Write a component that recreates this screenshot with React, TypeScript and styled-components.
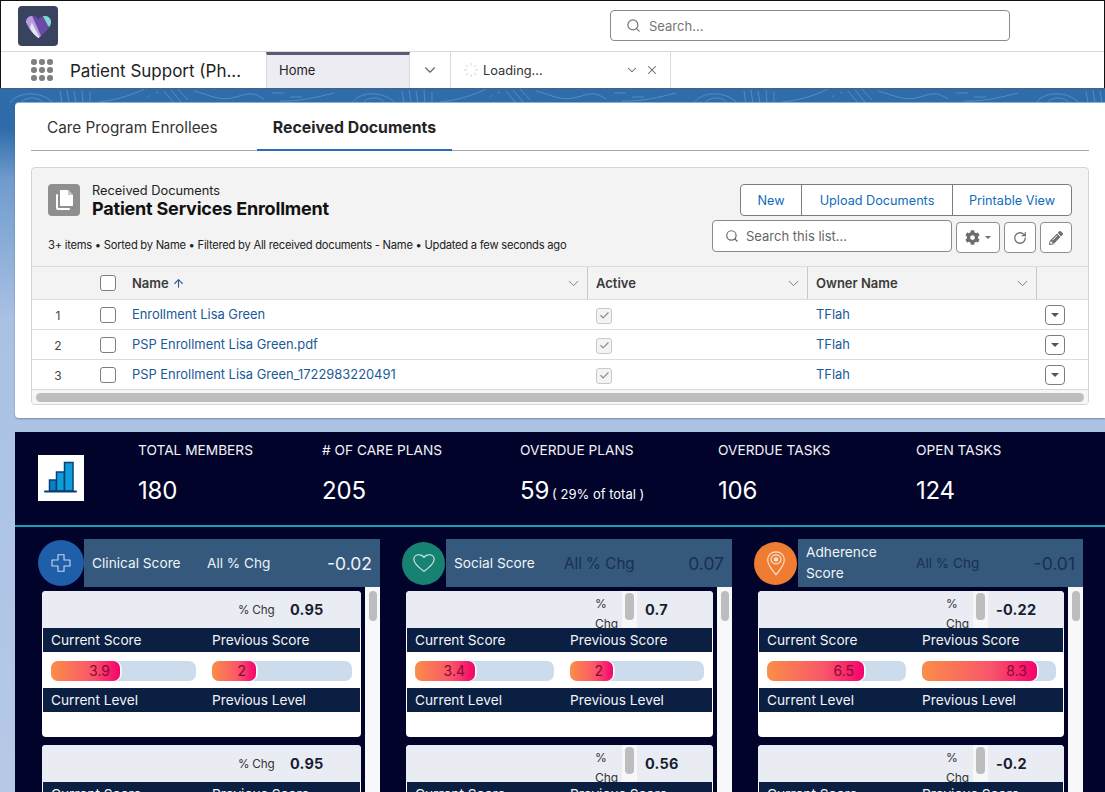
import React from "react";
import styled, { createGlobalStyle } from "styled-components";
import { Search, ChevronDown, X, ArrowUp, RotateCw, Check } from "lucide-react";
import { FaCog, FaPencilAlt } from "react-icons/fa";

const Global = createGlobalStyle`
  html, body { margin: 0; padding: 0; background: #fff; }
  body { font-family: Inter, "Liberation Sans", sans-serif; color: #181818; -webkit-font-smoothing: antialiased; }
  * { box-sizing: border-box; }
`;

const Frame = styled.div`
  position: relative; isolation: isolate;
  width: 1105px; height: 792px; overflow: hidden; background: #fff;
  outline: 1px solid #111; outline-offset: -1px;
`;

const TopBar = styled.header`
  height: 52px; display: flex; align-items: flex-start; border-bottom: 1px solid #d9d9d9;
  padding: 6px 0 0 18px;
`;
const Logo = styled.div`
  width: 40px; height: 40px; border-radius: 4px; background: #3a435d;
  display: flex; align-items: flex-start; justify-content: center; padding-top: 9px;
`;
const GlobalSearch = styled.div`
  margin: 4px 0 0 552px; width: 400px; height: 31px; border: 1px solid #8a8a8a; border-radius: 4px;
  display: flex; align-items: center; gap: 8px; padding-left: 15px; color: #757575; font-size: 13px;
`;

const NavBar = styled.nav`
  height: 36px; display: flex; align-items: stretch;
`;
const Launcher = styled.div`
  width: 70px; padding-left: 31px; display: flex; align-items: center;
`;
const Dots = styled.div`
  display: grid; grid-template-columns: repeat(3, 5.500px); gap: 2.500px;
  span { width: 5.500px; height: 5.500px; border-radius: 50%; background: #7f7f7f; }
`;
const AppName = styled.div`
  width: 196px; font-size: 17px; line-height: 38px; color: #222; white-space: nowrap;
`;
const HomeTab = styled.div`
  width: 144px; background: #eeecf3; border-top: 3px solid #5c5877; border-left: 1px solid #d9d9d9; border-right: 1px solid #d9d9d9;
  padding-left: 12px; font-size: 13px; line-height: 31px; color: #222;
`;
const TabMenu = styled.div`
  width: 41px; border-right: 1px solid #d9d9d9; display: flex; align-items: center; justify-content: center; color: #666;
`;
const LoadingTab = styled.div`
  width: 220px; border-right: 1px solid #d9d9d9; display: flex; align-items: center; padding-left: 12px; gap: 4px;
  font-size: 12.800px; color: #333;
`;
const LoadingLabel = styled.span`
  flex: 1;
`;
const LoadingActions = styled.div`
  display: flex; align-items: center; gap: 6px; padding-right: 11px; color: #666;
`;

const Stage = styled.main`
  position: relative; height: 704px; padding: 14px 0 0 15px;
  background: linear-gradient(180deg, #2f6daa 0, #2f6daa 40px, #6f9bcd 90px, #a9c1e3 230px, #b6c9e7 704px);
  border-top: 1px solid #56588a;
`;
const Topo = styled.svg`
  position: absolute; left: 0; top: 0; width: 1105px; height: 14px; z-index: 0;
`;
const WhiteCard = styled.section`
  position: relative; z-index: 1; height: 315px; background: #fff; border-radius: 4px 0 0 4px;
  box-shadow: 0 1px 2px rgba(60,70,90,.45), 0 -1px 0 #8fb4d9;
  padding: 0 16px;
`;
const TabStrip = styled.div`
  height: 48px; display: flex; border-bottom: 1px solid #a8a8a8; margin-bottom: 16px;
`;
const PlainTab = styled.div`
  width: 226px; padding-left: 16px; font-size: 15.300px; line-height: 50px; height: 48px; color: #333;
`;
const ActiveTab = styled.div`
  width: 195px; text-align: center; font-size: 15.800px; line-height: 50px; height: 48px; font-weight: 700; color: #242424;
  border-bottom: 2px solid #2a6fb5;
`;

const ListBox = styled.div`
  height: 238px; border: 1px solid #d5d5d5; border-radius: 4px; background: #f3f3f3; width: 1058px; overflow: hidden;
`;
const ListHead = styled.div`
  height: 98px; position: relative; padding: 15px 16px 0;
  display: flex; justify-content: space-between;
`;
const TitleGroup = styled.div`
  display: flex; gap: 12px; align-items: flex-start;
`;
const DocIcon = styled.div`
  width: 32px; height: 32px; border-radius: 4px; background: #8f8f8f; display: flex; align-items: center; justify-content: center; margin-top: 1px;
`;
const TitleText = styled.div``;
const Kicker = styled.div`
  font-size: 12.800px; line-height: 16px; color: #222;
`;
const ListTitle = styled.div`
  font-size: 18px; line-height: 19px; font-weight: 700; color: #111; letter-spacing: -0.2px;
`;
const MetaLine = styled.div`
  position: absolute; left: 16px; top: 69px; font-size: 11.200px; line-height: 16px; color: #222; white-space: nowrap; letter-spacing: -0.25px;
`;
const Controls = styled.div`
  display: flex; flex-direction: column; align-items: flex-end; gap: 4px; margin-top: 1px;
`;
const ButtonGroup = styled.div`
  display: flex; height: 32px; border: 1px solid #7d7d7d; border-radius: 4px; background: #fff;
`;
const GroupBtn = styled.div<{ $w: number }>`
  width: ${p => p.$w}px; display: flex; align-items: center; justify-content: center; font-size: 12.700px; color: #0f6cbd;
  & + & { border-left: 1px solid #7d7d7d; }
`;
const ToolRow = styled.div`
  display: flex; gap: 4px; align-items: flex-start;
`;
const ListSearch = styled.div`
  width: 240px; height: 32px; border: 1px solid #8a8a8a; border-radius: 4px; background: #fff;
  display: flex; align-items: center; gap: 7px; padding-left: 12px; font-size: 13px; color: #666;
`;
const IconBtn = styled.div<{ $w: number }>`
  width: ${p => p.$w}px; height: 31px; margin-top: 2px; border: 1px solid #8f8f8f; border-radius: 4px; background: #fff;
  display: flex; align-items: center; justify-content: center; gap: 5px; color: #706e6b;
`;
const Caret = styled.span`
  width: 0; height: 0; border-left: 3px solid transparent; border-right: 3px solid transparent; border-top: 3.500px solid #706e6b;
`;

const Row = styled.div<{ $head?: boolean }>`
  display: grid; grid-template-columns: 52px 48px 455px 220px 229px 1fr; align-items: center;
  height: ${p => (p.$head ? 33 : 30)}px;
  background: ${p => (p.$head ? "#f3f3f3" : "#fff")};
  border-top: 1px solid #dcdcdc;
  font-size: 13px;
`;
const IndexCell = styled.div`
  text-align: center; font-size: 12px; color: #444; padding-top: 2px;
`;
const CheckCell = styled.div`
  padding-left: 16px; display: flex;
`;
const Box = styled.span`
  width: 16px; height: 16px; border: 1px solid #7d7d7d; border-radius: 3px; background: #fff; display: block;
`;
const HeadCell = styled.div<{ $rule?: boolean }>`
  height: 100%; display: flex; align-items: center; justify-content: space-between; gap: 4px;
  padding: 0 5px 0 ${p => (p.$rule ? 8 : 0)}px; font-weight: 600; color: #3a3a3a;
  border-left: ${p => (p.$rule ? "1px solid #c9c9c9" : "0")};
`;
const SortName = styled.span`
  display: flex; align-items: center; gap: 3px;
`;
const RowChevron = styled.span`
  display: flex; color: #6d6d6d;
`;
const LinkText = styled.a`
  color: #1b5a98; font-size: 12.900px; text-decoration: none;
`;
const OwnerCell = styled.div`
  padding-left: 9px; display: flex;
`;
const ActiveCell = styled.div`
  padding: 2px 0 0 9px; display: flex;
`;
const DisabledBox = styled.span`
  width: 16px; height: 16px; border: 1px solid #c9c9c9; border-radius: 3px; background: #f3f3f3; display: flex; align-items: center; justify-content: center; color: #8a8a8a;
`;
const ActionCell = styled.div`
  padding-left: 9px; display: flex;
`;
const RowAction = styled.span`
  width: 20px; height: 20px; border: 1px solid #7d7d7d; border-radius: 4px; background: #fff; display: flex; align-items: center; justify-content: center;
`;
const ActionCaret = styled.span`
  width: 0; height: 0; border-left: 4px solid transparent; border-right: 4px solid transparent; border-top: 4.500px solid #555;
`;
const HScroll = styled.div`
  height: 16px; border-top: 1px solid #d8d8d8; background: #f6f6f6; padding: 3px 4px;
`;
const HThumb = styled.div`
  height: 9px; border-radius: 5px; background: #bdbdbd;
`;

const Dashboard = styled.section`
  position: relative; z-index: 1; margin-top: 14px; height: 360px; background: #02032a; color: #fff;
`;
const KpiRow = styled.div`
  height: 95px; border-bottom: 2px solid #1a9fb0;
  display: grid; grid-template-columns: 100px 184px 198px 198px 198px 198px; padding: 23px 0 0 23px;
`;
const ChartTile = styled.div`
  width: 46px; height: 46px; background: #fff; display: flex;
`;
const KpiCell = styled.div`
  margin-top: -15.500px;
`;
const KpiLabel = styled.div`
  font-size: 13.700px; line-height: 20px; color: #f2f2f6; white-space: nowrap;
`;
const KpiValue = styled.div`
  margin-top: 16px; font-size: 24px; line-height: 30px; color: #fff; white-space: nowrap; letter-spacing: -0.2px;
`;
const KpiNote = styled.span`
  font-size: 13px; margin-left: 3px; letter-spacing: 0;
`;

const ScoreGrid = styled.div`
  display: grid; grid-template-columns: 342px 330px 329px; column-gap: 22px; padding: 12px 0 0 23px;
`;
const ScoreCol = styled.div``;
const ScoreHead = styled.div`
  display: flex; height: 48px; align-items: center;
`;
const Circle = styled.div<{ $bg: string; $size: number; $after: number }>`
  width: ${p => p.$size}px; height: ${p => p.$size}px; flex: none; border-radius: 50%; background: ${p => p.$bg};
  margin-right: ${p => p.$after}px;
  display: flex; align-items: center; justify-content: center;
`;
const HeadBand = styled.div<{ $gap: number }>`
  flex: 1; height: 48px; background: #34597d; display: grid; align-items: center;
  grid-template-columns: ${p => p.$gap}px 1fr auto; padding: 0 8px;
`;
const ScoreName = styled.div`
  font-size: 13.700px; line-height: 21px; color: #f1f4f8;
`;
const AllChg = styled.div<{ $dark?: boolean; $size: number }>`
  font-size: ${p => p.$size}px; color: ${p => (p.$dark ? "#1a3050" : "#eef2f7")};
`;
const AllVal = styled.div<{ $dark?: boolean }>`
  font-size: 17.500px; color: ${p => (p.$dark ? "#1a3050" : "#eef2f7")};
`;
const ScoreBody = styled.div`
  display: grid; grid-template-columns: 1fr 15px; column-gap: 4px; height: 210px;
`;
const CardStack = styled.div`
  padding: 4px 0 0 4px; display: flex; flex-direction: column; gap: 8px; height: 210px; overflow: hidden;
`;
const VTrack = styled.div`
  background: #f8f8fb; padding: 4px 3px 0 4px;
`;
const VThumb = styled.div<{ $h: number }>`
  height: ${p => p.$h}px; border-radius: 4px; background: #bdbdbd;
`;
const ScoreCard = styled.article`
  flex: none; height: 146px; background: #fff; border-radius: 4px; overflow: hidden;
`;
const PctStrip = styled.div<{ $left: number }>`
  height: 37px; background: #e9edf3; display: flex; padding-left: ${p => p.$left}px; align-items: flex-start; overflow: hidden;
`;
const PctInline = styled.div`
  font-size: 11.700px; line-height: 38px; color: #333; width: 52px; white-space: nowrap; letter-spacing: -0.2px;
`;
const PctWrap = styled.div`
  width: 27px; font-size: 12px; line-height: 19.500px; color: #333; padding-top: 3px;
`;
const MiniTrack = styled.div`
  width: 15px; height: 37px; background: #f7f7f9; padding: 2px 3px 0 3px;
`;
const MiniThumb = styled.div`
  height: 27px; border-radius: 4px; background: #bdbdbd;
`;
const PctVal = styled.div<{ $gap: number }>`
  font-size: 14.500px; line-height: 38px; font-weight: 700; color: #1a1d33; margin-left: ${p => p.$gap}px; letter-spacing: .2px;
`;
const LabelBar = styled.div<{ $second: number }>`
  margin: 0 1px; height: 24px; background: #0a1f42; color: #f2f4f8; font-size: 13.700px; line-height: 24px;
  display: grid; grid-template-columns: ${p => p.$second}px 1fr; padding-left: 8px;
`;
const MeterRow = styled.div<{ $second: number }>`
  height: 36px; padding: 9px 0 0 9px; display: grid; grid-template-columns: ${p => p.$second}px 1fr;
`;
const Meter = styled.div<{ $w: number }>`
  width: ${p => p.$w}px; height: 20px; border-radius: 7px; background: #ccdcec;
`;
const MeterFill = styled.div`
  height: 20px; border-radius: 7px; background: linear-gradient(90deg, #fb8e48 0, #f9556a 60%, #f5026b 100%);
  box-shadow: 1.500px 0 0 #fff; color: #8a0a35; font-size: 14px; line-height: 20px; text-align: right; padding-right: 10px;
`;
const BlankRow = styled.div`
  height: 25px;
`;

const Heart = () => (
  <svg width="27" height="24" viewBox="0 0 28 26" preserveAspectRatio="none" aria-hidden="true">
    <defs>
      <clipPath id="heartClip">
        <path d="M14 25C9 20 1 14 1 7.500C1 3.500 4 1 7.500 1C10.500 1 12.800 2.800 14 5C15.200 2.800 17.500 1 20.500 1C24 1 27 3.500 27 7.500C27 14 19 20 14 25Z" />
      </clipPath>
    </defs>
    <g clipPath="url(#heartClip)">
      <rect width="28" height="26" fill="#6a4aa6" />
      <path d="M0 0H7L18 26H11L0 6Z" fill="#b99ade" />
      <path d="M7 8L16 26H12L5 14Z" fill="#dfe6f0" />
      <path d="M18 0H28V14L24 12Z" fill="#7fdbd0" />
    </g>
  </svg>
);
const PagesIcon = () => (
  <svg width="22" height="24" viewBox="0 0 22 24" fill="none" aria-hidden="true">
    <path d="M8 2H15L20 7V17C20 17.600 19.600 18 19 18H8C7.400 18 7 17.600 7 17V3C7 2.400 7.400 2 8 2Z" fill="#fff" />
    <path d="M15 2L20 7H16C15.400 7 15 6.600 15 6Z" fill="#c8c8c8" />
    <path d="M4 7V20C4 20.600 4.400 21 5 21H16" stroke="#fff" strokeWidth="2" strokeLinecap="round" />
  </svg>
);
const BarsIcon = () => (
  <svg width="46" height="46" viewBox="0 0 46 46" aria-hidden="true">
    <rect x="11.500" y="25" width="7" height="11" fill="#0d7fc4" stroke="#0b3f73" strokeWidth="1.500" />
    <rect x="18.500" y="17" width="8" height="19" fill="#0d9dda" stroke="#0b3f73" strokeWidth="1.500" />
    <rect x="26.500" y="7.500" width="8.500" height="28.500" fill="#0d9dda" stroke="#0b3f73" strokeWidth="1.500" />
    <path d="M7 36.500H38" stroke="#0b3f73" strokeWidth="2" strokeLinecap="round" />
  </svg>
);
const PlusIcon = () => (
  <svg width="24" height="24" viewBox="0 0 32 32" fill="none" stroke="#c5d9ef" strokeWidth="1.500" aria-hidden="true">
    <path d="M12 5H20V12H28V20H20V27H12V20H4V12H12Z" strokeLinejoin="round" />
  </svg>
);
const HeartLine = () => (
  <svg width="24" height="20" viewBox="0 0 26 24" preserveAspectRatio="none" fill="none" stroke="#d5efe9" strokeWidth="1.200" aria-hidden="true">
    <path d="M13 22C8 18 2 13 2 7.500C2 4 4.600 2 7.500 2C9.800 2 12 3.200 13 5.500C14 3.200 16.200 2 18.500 2C21.400 2 24 4 24 7.500C24 13 18 18 13 22Z" strokeLinejoin="round" />
  </svg>
);
const PinIcon = () => (
  <svg width="20" height="27" viewBox="0 0 24 36" preserveAspectRatio="none" fill="none" stroke="#fbe3cf" strokeWidth="1.400" aria-hidden="true">
    <path d="M12 33C8 27 2 21 2 13C2 7 6.500 2.500 12 2.500C17.500 2.500 22 7 22 13C22 21 16 27 12 33Z" />
    <circle cx="12" cy="12.500" r="6" />
    <circle cx="12" cy="12.500" r="2.200" fill="#fbe3cf" />
  </svg>
);

type MeterData = { v: string; w: number };
type CardData = { pct: string; a: MeterData; b: MeterData };
type ColData = {
  name: string; allPct: string; allVal: string; dark: boolean; bg: string; size: number; after: number;
  gap: number; chg: number; left: number; second: number; tw: number; tb: number; icon: React.ReactNode; cards: CardData[];
};

const cols: ColData[] = [
  { name: "Clinical Score", allPct: "All % Chg", allVal: "-0.02", dark: false, bg: "#1f5ea8", size: 46, after: 0, gap: 115, chg: 13.6, left: 196, second: 161, tw: 145, tb: 140, icon: <PlusIcon />,
    cards: [{ pct: "0.95", a: { v: "3.9", w: 69 }, b: { v: "2", w: 44 } }, { pct: "0.95", a: { v: "3.9", w: 69 }, b: { v: "2", w: 44 } }] },
  { name: "Social Score", allPct: "All % Chg", allVal: "0.07", dark: true, bg: "#178272", size: 43, after: 1, gap: 110, chg: 15.2, left: 189, second: 155, tw: 139, tb: 134, icon: <HeartLine />,
    cards: [{ pct: "0.7", a: { v: "3.4", w: 60 }, b: { v: "2", w: 43 } }, { pct: "0.56", a: { v: "3.4", w: 60 }, b: { v: "2", w: 43 } }] },
  { name: "Adherence Score", allPct: "All % Chg", allVal: "-0.01", dark: true, bg: "#ee7c33", size: 43, after: 1, gap: 110, chg: 13.6, left: 188, second: 155, tw: 139, tb: 134, icon: <PinIcon />,
    cards: [{ pct: "-0.22", a: { v: "6.5", w: 97 }, b: { v: "8.3", w: 115 } }, { pct: "-0.2", a: { v: "6.5", w: 97 }, b: { v: "8.3", w: 115 } }] },
];
const kpis: { label: string; value: string; note?: string }[] = [
  { label: "TOTAL MEMBERS", value: "180" },
  { label: "# OF CARE PLANS", value: "205" },
  { label: "OVERDUE PLANS", value: "59", note: "( 29% of total )" },
  { label: "OVERDUE TASKS", value: "106" },
  { label: "OPEN TASKS", value: "124" },
];
const docs = ["Enrollment Lisa Green", "PSP Enrollment Lisa Green.pdf", "PSP Enrollment Lisa Green_1722983220491"];

const topoPaths = Array.from({ length: 5 }, (_, i) => {
  const x = i * 342 - 2;
  return [
    `M${x + 12} 15C${x + 16} 3 ${x + 44} 0 ${x + 56} 15`,
    `M${x + 22} 15C${x + 26} 8 ${x + 40} 6 ${x + 46} 15`,
    `M${x + 64} 15L${x + 62} 2M${x + 71} 15L${x + 69} 1M${x + 78} 15L${x + 76} 2M${x + 85} 15L${x + 84} 1M${x + 92} 15L${x + 92} 3`,
    `M${x + 100} 13C${x + 112} 12 ${x + 130} 8 ${x + 146} 0`,
    `M${x + 150} 8L${x + 152} 6M${x + 158} 4L${x + 160} 3`,
    `M${x + 166} 2L${x + 176} 14M${x + 173} 1L${x + 183} 13M${x + 180} 0L${x + 190} 11`,
    `M${x + 196} 2C${x + 212} 6 ${x + 222} 13 ${x + 238} 8S${x + 256} 4 ${x + 266} 10`,
    `M${x + 274} 4H${x + 286}M${x + 292} 8H${x + 304}M${x + 282} 12C${x + 300} 13 ${x + 320} 8 ${x + 336} 4`,
  ].join("");
}).join("");

export default function App() {
  return (
    <Frame>
      <Global />
      <TopBar>
        <Logo><Heart /></Logo>
        <GlobalSearch><Search size={15} strokeWidth={2} />Search...</GlobalSearch>
      </TopBar>
      <NavBar>
        <Launcher><Dots>{Array.from({ length: 9 }, (_, i) => <span key={i} />)}</Dots></Launcher>
        <AppName>Patient Support (Ph...</AppName>
        <HomeTab>Home</HomeTab>
        <TabMenu><ChevronDown size={18} strokeWidth={1.5} /></TabMenu>
        <LoadingTab>
          <svg width="16" height="16" viewBox="0 0 16 16" stroke="#dfe3e8" strokeWidth="1.400" aria-hidden="true">
            <path d="M8 1V4M8 12V15M1 8H4M12 8H15M3 3L5 5M11 11L13 13M3 13L5 11M11 5L13 3" />
          </svg>
          <LoadingLabel>Loading...</LoadingLabel>
          <LoadingActions><ChevronDown size={14} strokeWidth={1.8} /><X size={14} strokeWidth={1.8} /></LoadingActions>
        </LoadingTab>
      </NavBar>
      <Stage>
        <Topo viewBox="0 0 1105 14" aria-hidden="true">
          <path d={topoPaths} fill="none" stroke="#6aa0d0" strokeWidth="1" opacity=".6" />
        </Topo>
        <WhiteCard>
          <TabStrip>
            <PlainTab>Care Program Enrollees</PlainTab>
            <ActiveTab>Received Documents</ActiveTab>
          </TabStrip>
          <ListBox>
            <ListHead>
              <TitleGroup>
                <DocIcon><PagesIcon /></DocIcon>
                <TitleText>
                  <Kicker>Received Documents</Kicker>
                  <ListTitle>Patient Services Enrollment</ListTitle>
                </TitleText>
              </TitleGroup>
              <MetaLine>3+ items • Sorted by Name • Filtered by All received documents - Name • Updated a few seconds ago</MetaLine>
              <Controls>
                <ButtonGroup>
                  <GroupBtn $w={60}>New</GroupBtn>
                  <GroupBtn $w={151}>Upload Documents</GroupBtn>
                  <GroupBtn $w={119}>Printable View</GroupBtn>
                </ButtonGroup>
                <ToolRow>
                  <ListSearch><Search size={14} strokeWidth={2} />Search this list...</ListSearch>
                  <IconBtn $w={44}><FaCog size={15} /><Caret /></IconBtn>
                  <IconBtn $w={32}><RotateCw size={14} strokeWidth={2.2} /></IconBtn>
                  <IconBtn $w={32}><FaPencilAlt size={14} /></IconBtn>
                </ToolRow>
              </Controls>
            </ListHead>
            <Row $head>
              <span />
              <CheckCell><Box /></CheckCell>
              <HeadCell><SortName>Name <ArrowUp size={13} color="#2f5d91" strokeWidth={2} /></SortName><RowChevron><ChevronDown size={17} strokeWidth={1.2} /></RowChevron></HeadCell>
              <HeadCell $rule>Active<RowChevron><ChevronDown size={17} strokeWidth={1.2} /></RowChevron></HeadCell>
              <HeadCell $rule>Owner Name<RowChevron><ChevronDown size={17} strokeWidth={1.2} /></RowChevron></HeadCell>
              <HeadCell $rule />
            </Row>
            {docs.map((d, i) => (
              <Row key={d}>
                <IndexCell>{i + 1}</IndexCell>
                <CheckCell><Box /></CheckCell>
                <LinkText>{d}</LinkText>
                <ActiveCell><DisabledBox><Check size={11} strokeWidth={2.5} /></DisabledBox></ActiveCell>
                <OwnerCell><LinkText>TFlah</LinkText></OwnerCell>
                <ActionCell><RowAction><ActionCaret /></RowAction></ActionCell>
              </Row>
            ))}
            <HScroll><HThumb /></HScroll>
          </ListBox>
        </WhiteCard>
        <Dashboard>
          <KpiRow>
            <ChartTile><BarsIcon /></ChartTile>
            {kpis.map(k => (
              <KpiCell key={k.label}>
                <KpiLabel>{k.label}</KpiLabel>
                <KpiValue>{k.value}{k.note && <KpiNote>{k.note}</KpiNote>}</KpiValue>
              </KpiCell>
            ))}
          </KpiRow>
          <ScoreGrid>
            {cols.map(c => (
              <ScoreCol key={c.name}>
                <ScoreHead>
                  <Circle $bg={c.bg} $size={c.size} $after={c.after}>{c.icon}</Circle>
                  <HeadBand $gap={c.gap}>
                    <ScoreName>{c.name}</ScoreName>
                    <AllChg $dark={c.dark} $size={c.chg}>{c.allPct}</AllChg>
                    <AllVal $dark={c.dark}>{c.allVal}</AllVal>
                  </HeadBand>
                </ScoreHead>
                <ScoreBody>
                  <CardStack>
                    {c.cards.map((card, i) => (
                      <ScoreCard key={i}>
                        <PctStrip $left={c.left}>
                          {c.dark ? (
                            <>
                              <PctWrap>% Chg</PctWrap>
                              <MiniTrack><MiniThumb /></MiniTrack>
                              <PctVal $gap={8}>{card.pct}</PctVal>
                            </>
                          ) : (
                            <>
                              <PctInline>% Chg</PctInline>
                              <PctVal $gap={0}>{card.pct}</PctVal>
                            </>
                          )}
                        </PctStrip>
                        <LabelBar $second={c.second}><span>Current Score</span><span>Previous Score</span></LabelBar>
                        <MeterRow $second={c.second}>
                          <Meter $w={c.tw}><MeterFill style={{ width: card.a.w }}>{card.a.v}</MeterFill></Meter>
                          <Meter $w={c.tb}><MeterFill style={{ width: card.b.w }}>{card.b.v}</MeterFill></Meter>
                        </MeterRow>
                        <LabelBar $second={c.second}><span>Current Level</span><span>Previous Level</span></LabelBar>
                        <BlankRow />
                      </ScoreCard>
                    ))}
                  </CardStack>
                  <VTrack><VThumb $h={30} /></VTrack>
                </ScoreBody>
              </ScoreCol>
            ))}
          </ScoreGrid>
        </Dashboard>
      </Stage>
    </Frame>
  );
}
